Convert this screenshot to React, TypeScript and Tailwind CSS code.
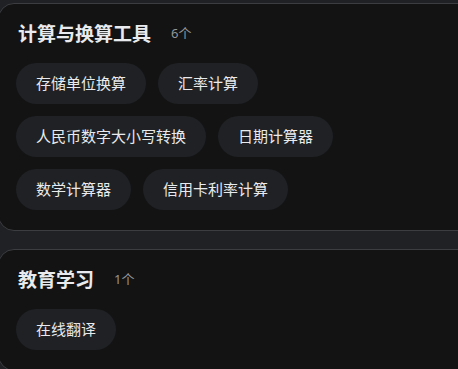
const groups = [
  {
    title: '计算与换算工具',
    tools: ['存储单位换算', '汇率计算', '人民币数字大小写转换', '日期计算器', '数学计算器', '信用卡利率计算'],
  },
  {
    title: '教育学习',
    tools: ['在线翻译'],
  },
]

function ToolGroup({ title, tools }: { title: string; tools: string[] }) {
  return (
    <section className="-ml-[2px] w-[490px] rounded-2xl border border-[#3c3d40] bg-[#131313] pl-[17px] pt-[18px] pb-5">
      <div className="ml-[2px] flex h-6 items-center">
        <h2 className="text-[19px] font-bold leading-6 text-[#e8eaed]">{title}</h2>
        <span className="ml-5 text-[13px] text-[#92969b]">{tools.length}个</span>
      </div>
      <div className="mt-[17px] flex w-[440px] flex-wrap gap-x-3 gap-y-3">
        {tools.map((t) => (
          <span
            key={t}
            className="flex h-[41px] items-center rounded-full bg-[#1f2124] px-5 text-[15px] text-[#e8eaed]"
          >
            {t}
          </span>
        ))}
      </div>
    </section>
  )
}

export default function App() {
  return (
    <div
      className="h-[369px] w-[458px] overflow-hidden bg-[#202124] pt-[3px]"
      style={{ fontFamily: '"Noto Sans", "Noto Sans CJK SC", sans-serif' }}
    >
      <div className="flex flex-col gap-[18px]">
        {groups.map((g) => (
          <ToolGroup key={g.title} title={g.title} tools={g.tools} />
        ))}
      </div>
    </div>
  )
}
